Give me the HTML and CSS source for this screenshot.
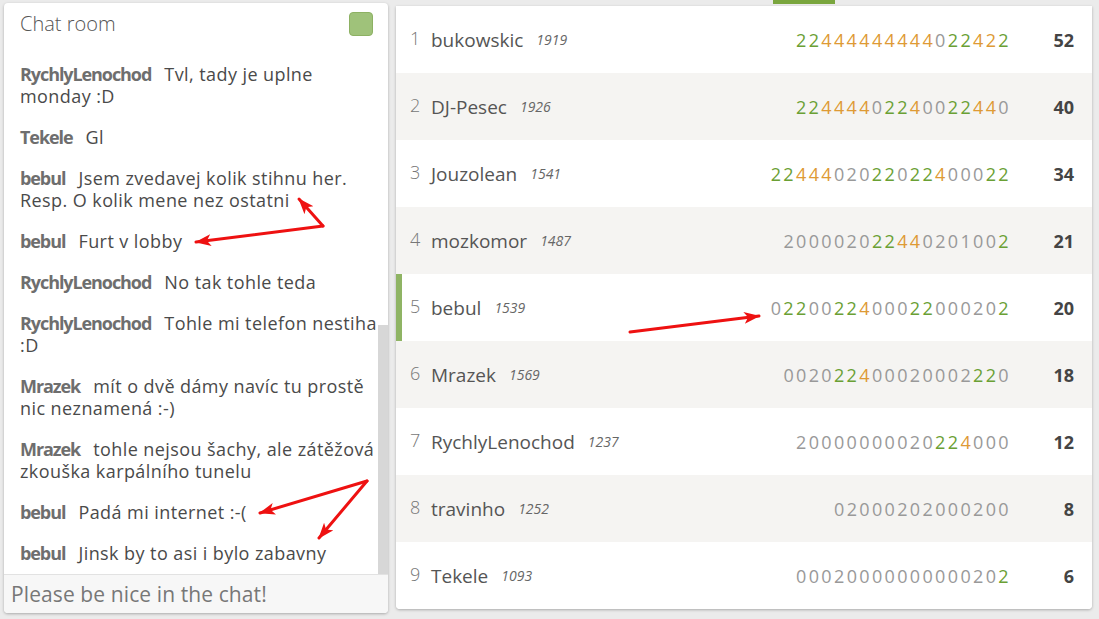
FILE: index.html
```html
<!DOCTYPE html>
<html lang="cs">
<head>
<meta charset="utf-8">
<title>Chat room</title>
<link rel="stylesheet" href="styles.css">
</head>
<body>
<div class="page">
  <section class="chat">
    <header class="chat-head">
      <h2 class="chat-title">Chat room</h2>
      <span class="status"></span>
    </header>
    <div class="messages-wrap">
      <div class="messages">
        <p class="msg"><span class="user">RychlyLenochod</span> Tvl, tady je uplne monday :D</p>
        <p class="msg"><span class="user">Tekele</span> Gl</p>
        <p class="msg"><span class="user">bebul</span> Jsem zvedavej kolik stihnu her. Resp. O kolik mene nez ostatni</p>
        <p class="msg"><span class="user">bebul</span> Furt v lobby</p>
        <p class="msg"><span class="user">RychlyLenochod</span> No tak tohle teda</p>
        <p class="msg"><span class="user">RychlyLenochod</span> Tohle mi telefon nestiha :D</p>
        <p class="msg"><span class="user">Mrazek</span> mít o dvě dámy navíc tu prostě nic neznamená :-)</p>
        <p class="msg"><span class="user">Mrazek</span> tohle nejsou šachy, ale zátěžová zkouška karpálního tunelu</p>
        <p class="msg"><span class="user">bebul</span> Padá mi internet :-(</p>
        <p class="msg"><span class="user">bebul</span> Jinsk by to asi i bylo zabavny</p>
      </div>
      <div class="scroll-thumb"></div>
    </div>
    <input class="chat-input" type="text" placeholder="Please be nice in the chat!">
  </section>

  <main class="standings">
    <div class="tabs"><span class="tab-active"></span></div>
    <div class="table">
      <div class="row">
        <span class="rank">1</span><span class="name">bukowskic</span><span class="rating">1919</span>
        <span class="scores"><b class="g">22</b><b class="o">444444444</b><b class="z">0</b><b class="g">22</b><b class="o">42</b><b class="g">2</b></span>
        <span class="points">52</span>
      </div>
      <div class="row alt">
        <span class="rank">2</span><span class="name">DJ-Pesec</span><span class="rating">1926</span>
        <span class="scores"><b class="g">22</b><b class="o">4444</b><b class="z">0</b><b class="g">22</b><b class="o">4</b><b class="z">00</b><b class="g">22</b><b class="o">44</b><b class="z">0</b></span>
        <span class="points">40</span>
      </div>
      <div class="row">
        <span class="rank">3</span><span class="name">Jouzolean</span><span class="rating">1541</span>
        <span class="scores"><b class="g">22</b><b class="o">444</b><b class="z">020</b><b class="g">22</b><b class="z">0</b><b class="g">22</b><b class="o">4</b><b class="z">000</b><b class="g">22</b></span>
        <span class="points">34</span>
      </div>
      <div class="row alt">
        <span class="rank">4</span><span class="name">mozkomor</span><span class="rating">1487</span>
        <span class="scores"><b class="z">2000020</b><b class="g">22</b><b class="o">44</b><b class="z">020100</b><b class="g">2</b></span>
        <span class="points">21</span>
      </div>
      <div class="row me">
        <span class="rank">5</span><span class="name">bebul</span><span class="rating">1539</span>
        <span class="scores"><b class="z">0</b><b class="g">22</b><b class="z">00</b><b class="g">22</b><b class="o">4</b><b class="z">000</b><b class="g">22</b><b class="z">00020</b><b class="g">2</b></span>
        <span class="points">20</span>
      </div>
      <div class="row alt">
        <span class="rank">6</span><span class="name">Mrazek</span><span class="rating">1569</span>
        <span class="scores"><b class="z">0020</b><b class="g">22</b><b class="o">4</b><b class="z">00020002</b><b class="g">22</b><b class="z">0</b></span>
        <span class="points">18</span>
      </div>
      <div class="row">
        <span class="rank">7</span><span class="name">RychlyLenochod</span><span class="rating">1237</span>
        <span class="scores"><b class="z">20000000020</b><b class="g">22</b><b class="o">4</b><b class="z">000</b></span>
        <span class="points">12</span>
      </div>
      <div class="row alt">
        <span class="rank">8</span><span class="name">travinho</span><span class="rating">1252</span>
        <span class="scores"><b class="z">02000202000200</b></span>
        <span class="points">8</span>
      </div>
      <div class="row">
        <span class="rank">9</span><span class="name">Tekele</span><span class="rating">1093</span>
        <span class="scores"><b class="z">0002000000000020</b><b class="g">2</b></span>
        <span class="points">6</span>
      </div>
    </div>
  </main>

  <svg class="annotations" width="1099" height="619" viewBox="0 0 1099 619" aria-hidden="true">
    <defs>
      <marker id="head" markerUnits="userSpaceOnUse" markerWidth="18" markerHeight="14" refX="15" refY="6" orient="auto">
        <path d="M0,0 L16,6 L0,12 L4,6 Z" fill="#ee1111"/>
      </marker>
    </defs>
    <g stroke="#ee1111" stroke-width="3" stroke-linecap="round" fill="none">
      <line x1="323" y1="226" x2="299" y2="199" marker-end="url(#head)"/>
      <line x1="323" y1="226" x2="196" y2="242" marker-end="url(#head)"/>
      <line x1="630" y1="332" x2="759" y2="316" marker-end="url(#head)"/>
      <line x1="367" y1="481" x2="260" y2="513" marker-end="url(#head)"/>
      <line x1="367" y1="481" x2="319" y2="538" marker-end="url(#head)"/>
    </g>
  </svg>
</div>
</body>
</html>
```

FILE: styles.css
```css
* { box-sizing: border-box; }

html, body {
  margin: 0;
  padding: 0;
  background: #ebebeb;
  font-family: "Open Sans", "Noto Sans", sans-serif;
}

.page {
  position: relative;
  width: 1099px;
  height: 619px;
  overflow: hidden;
  display: flex;
  align-items: flex-start;
  padding-left: 4px;
}

/* ---------- chat ---------- */
.chat {
  margin-top: 3px;
  width: 384px;
  height: 610px;
  background: #fff;
  border-radius: 4px;
  box-shadow: 0 1px 3px rgba(0,0,0,0.28);
  display: flex;
  flex-direction: column;
  overflow: hidden;
}

.chat-head {
  height: 45px;
  flex: none;
  display: flex;
  justify-content: space-between;
  align-items: flex-start;
  padding: 7px 15px 0 16px;
}

.chat-title {
  margin: 0;
  font-size: 20px;
  font-weight: 300;
  color: #555;
  line-height: 28px;
}

.status {
  margin-top: 2px;
  width: 24px;
  height: 24px;
  border-radius: 4px;
  background: #9fc27a;
  border: 1px solid #8db163;
}

.messages-wrap {
  position: relative;
  flex: 1;
  min-height: 0;
  overflow: hidden;
  display: flex;
  flex-direction: column;
  justify-content: flex-end;
  padding: 0 9px 10px 16px;
}

.messages {
  display: flex;
  flex-direction: column;
  gap: 19px;
}

.msg {
  margin: 0;
  font-size: 18px;
  line-height: 22px;
  letter-spacing: 0.42px;
  color: #4a4a4a;
}

.user {
  font-weight: 700;
  color: #6e6e6e;
  letter-spacing: -0.06em;
  margin-right: 8px;
}

.scroll-thumb {
  position: absolute;
  right: 0;
  bottom: 0;
  width: 10px;
  height: 249px;
  background: #d7d7d7;
}

.chat-input {
  flex: none;
  height: 39px;
  margin: 0;
  border: none;
  border-top: 1px solid #e2e2e2;
  background: #f7f7f7;
  padding: 0 7px;
  font-family: inherit;
  font-size: 21px;
  letter-spacing: 0.1px;
  color: #555;
  outline: none;
}
.chat-input::placeholder { color: #777; }

/* ---------- standings ---------- */
.standings {
  margin-left: 8px;
  width: 696px;
  display: flex;
  flex-direction: column;
}

.tabs {
  height: 6px;
  position: relative;
}
.tab-active {
  position: absolute;
  left: 377px;
  top: 0;
  width: 62px;
  height: 4px;
  background: #7aa63e;
}

.table {
  background: #fff;
  border-radius: 0 0 4px 4px;
  box-shadow: 0 1px 3px rgba(0,0,0,0.28);
  overflow: hidden;
}

.row {
  height: 67px;
  display: flex;
  align-items: center;
  padding-left: 14px;
  background: #fff;
}
.row.alt { background: #f5f4f2; }
.row.me {
  border-left: 6px solid #8fb464;
  padding-left: 8px;
}

.rank {
  width: 21px;
  font-size: 18px;
  font-weight: 300;
  color: #777;
  margin-top: -3px;
}

.name {
  font-size: 19px;
  color: #555;
  margin-right: 13px;
}

.rating {
  font-size: 14px;
  font-style: italic;
  color: #666;
}

.scores {
  flex: 1;
  text-align: right;
  font-size: 18px;
  letter-spacing: 2.35px;
  margin-right: 31px;
}
.scores b { font-weight: 400; }
.scores .g { color: #6aa034; }
.scores .o { color: #de9a35; }
.scores .z { color: #999; }

.points {
  width: 50px;
  padding-right: 18px;
  text-align: right;
  font-size: 18px;
  font-weight: 700;
  color: #444;
}

/* ---------- annotation overlay ---------- */
.annotations {
  position: absolute;
  left: 0;
  top: 0;
  pointer-events: none;
}
```
